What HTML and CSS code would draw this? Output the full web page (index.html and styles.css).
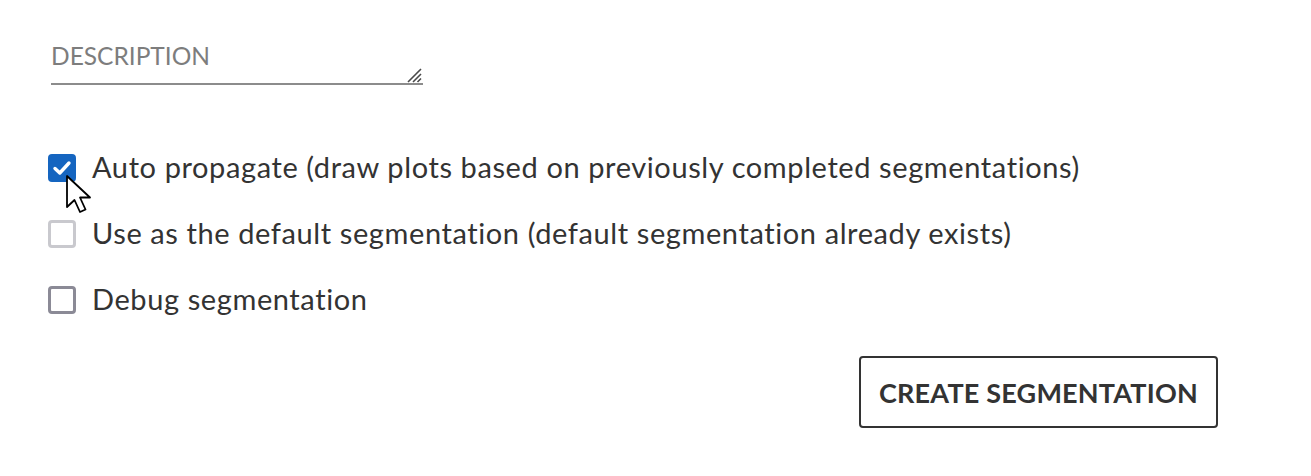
FILE: index.html
```html
<!DOCTYPE html>
<html>
<head>
<meta charset="utf-8">
<link rel="stylesheet" href="styles.css">
</head>
<body>
<div class="form">
  <div class="field">
    <textarea class="desc" placeholder="DESCRIPTION" rows="1"></textarea>
    <svg class="grip" width="18" height="18" viewBox="0 0 18 18"><path d="M17 4 L4 17 M17 9 L9 17 M17 13.5 L13.5 17" stroke="#4a4a4a" stroke-width="1.6" fill="none"/></svg>
  </div>
  <div class="options">
    <label class="opt">
      <span class="box checked">
        <svg width="22" height="22" viewBox="0 0 22 22"><path d="M4 11.5 L8.8 16 L18 6" stroke="#fff" stroke-width="3.4" fill="none" stroke-linecap="round" stroke-linejoin="round"/></svg>
      </span>
      <span class="lbl">Auto propagate (draw plots based on previously completed segmentations)</span>
      <svg class="cursor" width="30" height="40" viewBox="0 0 30 40"><path d="M2 2 L2 33 L9.5 26 L15 38 L20.5 35.5 L15 23.5 L25 23.5 Z" fill="#fff" stroke="#000" stroke-width="1.8" stroke-linejoin="round"/></svg>
    </label>
    <label class="opt">
      <span class="box disabled"></span>
      <span class="lbl">Use as the default segmentation (default segmentation already exists)</span>
    </label>
    <label class="opt">
      <span class="box"></span>
      <span class="lbl">Debug segmentation</span>
    </label>
  </div>
  <div class="actions">
    <button class="create">CREATE SEGMENTATION</button>
  </div>
</div>
</body>
</html>
```
FILE: styles.css
```css
html, body { margin: 0; padding: 0; background: #fff; }
body { font-family: "Lato", "Open Sans", sans-serif; color: #333; }
.form { padding: 38px 0 0 48px; width: 1170px; }
.field { position: relative; width: 372px; margin-left: 3px; }
.desc {
  display: block; width: 100%; box-sizing: border-box; resize: none;
  border: none; border-bottom: 2px solid #8c8c8c; outline: none;
  font-family: inherit; font-size: 24.5px; color: #333; padding: 3px 0 12px 0;
  height: 47px; overflow: hidden; background: transparent;
}
.desc::placeholder { color: #7d7d7d; }
.grip { position: absolute; right: 1px; bottom: 2px; }
.options { display: flex; flex-direction: column; gap: 38px; margin-top: 69px; }
.opt { display: flex; align-items: center; gap: 16px; height: 28px; position: relative; }
.box {
  width: 28px; height: 28px; box-sizing: border-box; border: 3px solid #8b8a96;
  border-radius: 4px; display: flex; align-items: center; justify-content: center; flex: none;
}
.box.checked { background: #1565c0; border-color: #1565c0; }
.box.disabled { border-color: #c9c9ce; }
.lbl { font-size: 29px; letter-spacing: 0.6px; color: #333; white-space: nowrap; margin-top: -3px; }
.cursor { position: absolute; left: 17px; top: 20px; }
.actions { display: flex; justify-content: flex-end; margin-top: 42px; }
.create {
  width: 359px; height: 72px; box-sizing: border-box; background: #fff;
  border: 2px solid #333; border-radius: 4px; font-family: inherit;
  font-weight: 700; font-size: 27px; color: #333; letter-spacing: 0.2px;
}
```
